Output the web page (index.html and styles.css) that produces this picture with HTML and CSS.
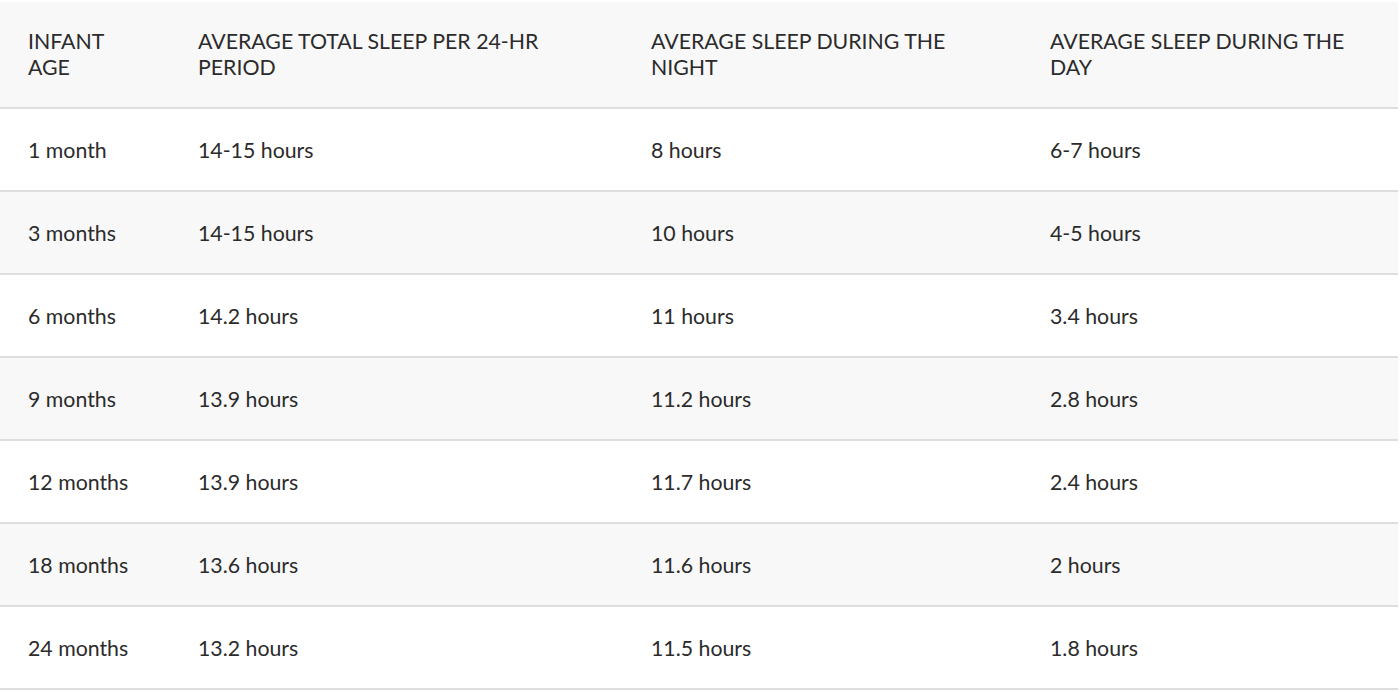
FILE: index.html
```html
<!DOCTYPE html>
<html lang="en">
<head>
<meta charset="utf-8">
<title>Infant Sleep</title>
<link rel="stylesheet" href="styles.css">
</head>
<body>
<table class="sleep-table">
  <thead>
    <tr>
      <th class="c1">INFANT AGE</th>
      <th class="c2">AVERAGE TOTAL SLEEP PER 24-HR PERIOD</th>
      <th class="c3">AVERAGE SLEEP DURING THE NIGHT</th>
      <th class="c4">AVERAGE SLEEP DURING THE DAY</th>
    </tr>
  </thead>
  <tbody>
    <tr><td>1 month</td><td>14-15 hours</td><td>8 hours</td><td>6-7 hours</td></tr>
    <tr><td>3 months</td><td>14-15 hours</td><td>10 hours</td><td>4-5 hours</td></tr>
    <tr><td>6 months</td><td>14.2 hours</td><td>11 hours</td><td>3.4 hours</td></tr>
    <tr><td>9 months</td><td>13.9 hours</td><td>11.2 hours</td><td>2.8 hours</td></tr>
    <tr><td>12 months</td><td>13.9 hours</td><td>11.7 hours</td><td>2.4 hours</td></tr>
    <tr><td>18 months</td><td>13.6 hours</td><td>11.6 hours</td><td>2 hours</td></tr>
    <tr><td>24 months</td><td>13.2 hours</td><td>11.5 hours</td><td>1.8 hours</td></tr>
  </tbody>
</table>
</body>
</html>
```

FILE: styles.css
```css
html, body {
  margin: 0;
  padding: 0;
  background: #ffffff;
}

body {
  font-family: Lato, "Liberation Sans", sans-serif;
  color: #2b2b2b;
  padding-top: 2px;
}

.sleep-table {
  width: 1398px;
  border-collapse: collapse;
  table-layout: fixed;
  font-size: 21.3px;
  line-height: 26px;
}

.sleep-table th,
.sleep-table td {
  text-align: left;
  font-weight: 400;
  padding: 28px 28px 27px 28px;
  border-bottom: 2px solid #dedede;
  vertical-align: middle;
}

.sleep-table thead tr {
  background: #f8f8f8;
}

.sleep-table th {
  padding-top: 26px;
  padding-bottom: 27px;
}

.sleep-table tbody tr:nth-child(even) {
  background: #f8f8f8;
}

.c1 { width: 114px; }
.c2 { width: 397px; }
.c3 { width: 343px; }
.c4 { width: auto; }
```
